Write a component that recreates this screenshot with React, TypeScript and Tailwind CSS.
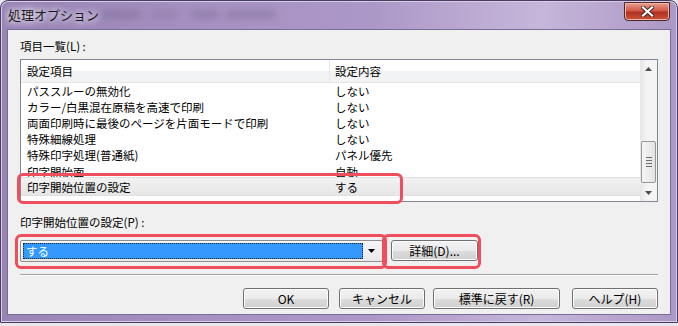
const rows = [
  { name: "パススルーの無効化", value: "しない" },
  { name: "カラー/白黒混在原稿を高速で印刷", value: "しない" },
  { name: "両面印刷時に最後のページを片面モードで印刷", value: "しない" },
  { name: "特殊細線処理", value: "しない" },
  { name: "特殊印字処理(普通紙)", value: "パネル優先" },
]

const btn =
  "h-[21px] rounded-[3px] border border-[#707070] bg-[linear-gradient(#f2f2f2_0%,#ebebeb_50%,#dddddd_51%,#cfcfcf_100%)] shadow-[inset_0_0_0_1px_#fcfcfc] flex items-center justify-center text-[12px] text-black"

const RedBox = ({ className }: { className: string }) => (
  <div className={`pointer-events-none absolute rounded-[6px] border-[3px] border-[#ef4f5c] ${className}`} />
)

export default function App() {
  return (
    <div className="w-[678px] h-[326px] bg-[#e9e6ee] font-['Noto_Sans_CJK_JP','Noto_Sans',sans-serif] text-[11.5px] leading-[16px] text-black">
      <div className="w-[678px] h-[323px] flex flex-col rounded-t-[8px] border border-[#4a3c60] bg-[linear-gradient(90deg,#9884b5_0%,#a691c2_30%,#ac98c8_55%,#c6b6da_80%,#ab97c5_100%)] shadow-[inset_0_0_0_1px_#d8cce6]">
        {/* title bar */}
        <div className="relative h-[28px] flex items-center pl-[7px]">
          <div className="absolute left-[100px] top-[9px] h-[9px] w-[40px] rounded bg-[#6d5c88]/30 blur-[3px]" />
          <div className="absolute left-[150px] top-[9px] h-[9px] w-[28px] rounded bg-[#6d5c88]/20 blur-[3px]" />
          <div className="absolute left-[190px] top-[9px] h-[9px] w-[28px] rounded bg-[#6d5c88]/30 blur-[3px]" />
          <div className="absolute left-[225px] top-[9px] h-[9px] w-[50px] rounded bg-[#6d5c88]/30 blur-[3px]" />
          <span className="relative text-[13px] text-[#1a1a1a] [text-shadow:0_0_6px_#fff,0_0_10px_#fff]">処理オプション</span>
          <div className="absolute right-[7px] top-[1px] w-[46px] h-[19px] rounded-b-[4px] border border-[#4b2a2a] bg-[linear-gradient(#e8a090_0%,#d2594a_45%,#b3321f_55%,#c9523a_100%)] shadow-[inset_0_0_0_1px_#f0b3a6] flex items-center justify-center">
            <svg width="13" height="11" viewBox="0 0 13 11">
              <path d="M2 1.5 L11 9.5 M11 1.5 L2 9.5" stroke="#4a2020" strokeWidth="4" strokeLinecap="square" />
              <path d="M2 1.5 L11 9.5 M11 1.5 L2 9.5" stroke="#fff" strokeWidth="2.2" strokeLinecap="square" />
            </svg>
          </div>
        </div>

        {/* client */}
        <div className="mx-[6px] h-[286px] border border-[#7c6c94] bg-[#f0f0f0] flex flex-col px-[12px] pt-[8px]">
          <div className="h-[16px]">項目一覧(L) :</div>

          {/* list */}
          <div className="relative mt-[5px] h-[143px] border border-[#828790] bg-white flex">
            <div className="flex-1 flex flex-col overflow-hidden">
              <div className="h-[23px] shrink-0 flex items-center border-b border-[#e5e5e5] bg-[linear-gradient(#ffffff_0%,#ffffff_50%,#f2f3f5_51%,#f2f3f5_100%)]">
                <div className="w-[309px] pl-[6px] border-r border-[#e5e5e5] h-full flex items-center">設定項目</div>
                <div className="pl-[5px]">設定内容</div>
              </div>
              {rows.map((r) => (
                <div key={r.name} className="h-[16px] shrink-0 flex items-center">
                  <div className="w-[309px] pl-[6px] whitespace-nowrap">{r.name}</div>
                  <div className="pl-[5px]">{r.value}</div>
                </div>
              ))}
              <div className="h-[14px] shrink-0 overflow-hidden">
                <div className="h-[14px] pt-[1px] flex items-start">
                  <div className="w-[309px] pl-[6px]">印字開始面</div>
                  <div className="pl-[5px]">自動</div>
                </div>
              </div>
              <div className="h-[19px] shrink-0 flex items-center bg-[linear-gradient(#f2f2f2,#e6e6e6)] border-y border-[#e0e0e0]">
                <div className="w-[309px] pl-[6px]">印字開始位置の設定</div>
                <div className="pl-[5px]">する</div>
              </div>
            </div>
            {/* scrollbar */}
            <div className="w-[17px] flex flex-col bg-[linear-gradient(90deg,#e6e6e6,#f4f4f4_40%,#f4f4f4)]">
              <div className="h-[17px] flex items-center justify-center">
                <svg width="7" height="4" viewBox="0 0 7 4"><path d="M0 4 L3.5 0 L7 4Z" fill="#4d4d4d" /></svg>
              </div>
              <div className="flex-1 flex flex-col justify-end pb-[1px]">
                <div className="h-[42px] mx-[1px] rounded-[2px] border border-[#979797] bg-[linear-gradient(90deg,#f5f5f5,#e3e3e3)] flex flex-col items-center justify-center gap-[2px]">
                  <div className="w-[6px] h-[1px] bg-[#6d6d6d]" />
                  <div className="w-[6px] h-[1px] bg-[#6d6d6d]" />
                  <div className="w-[6px] h-[1px] bg-[#6d6d6d]" />
                  <div className="w-[6px] h-[1px] bg-[#6d6d6d]" />
                </div>
              </div>
              <div className="h-[17px] flex items-center justify-center">
                <svg width="7" height="4" viewBox="0 0 7 4"><path d="M0 0 L3.5 4 L7 0Z" fill="#4d4d4d" /></svg>
              </div>
            </div>
            <RedBox className="left-[-4px] top-[113px] w-[386px] h-[31px]" />
          </div>

          <div className="mt-[12px] h-[16px]">印字開始位置の設定(P) :</div>

          <div className="relative mt-[10px] h-[22px] flex">
            <div className="w-[363px] h-[22px] border border-[#8e8f8f] rounded-[2px] bg-[linear-gradient(#f6f6f6,#e9e9e9)] flex p-[2px]">
              <div className="flex-1 bg-[#3399ff] outline-1 outline-dotted outline-[#1a1a1a] -outline-offset-1 text-white pl-[3px] leading-[16px]">する</div>
              <div className="w-[17px] flex items-center justify-center">
                <svg width="7" height="4" viewBox="0 0 7 4"><path d="M0 0 L3.5 4 L7 0Z" fill="#000" /></svg>
              </div>
            </div>
            <div className={`${btn} ml-[8px] w-[87px]`}>詳細(D)...</div>
            <RedBox className="left-[-5px] top-[-6px] w-[372px] h-[35px]" />
            <RedBox className="left-[362px] top-[-6px] w-[99px] h-[35px]" />
          </div>

          <div className="mt-[12px] h-[2px] border-t border-[#a0a0a0] border-b border-b-white" />

          <div className="mt-[12px] flex justify-end">
            <div className={`${btn} w-[86px] border-[#3c7fb1] shadow-[inset_0_0_0_1px_#bfe6f8] bg-[linear-gradient(#eaf6fd_0%,#d9f0fc_50%,#bee6fd_51%,#a7d9f5_100%)]`}>OK</div>
            <div className={`${btn} ml-[10px] w-[86px]`}>キャンセル</div>
            <div className={`${btn} ml-[8px] w-[127px]`}>標準に戻す(R)</div>
            <div className={`${btn} ml-[12px] w-[86px]`}>ヘルプ(H)</div>
          </div>
        </div>
      </div>
    </div>
  )
}
